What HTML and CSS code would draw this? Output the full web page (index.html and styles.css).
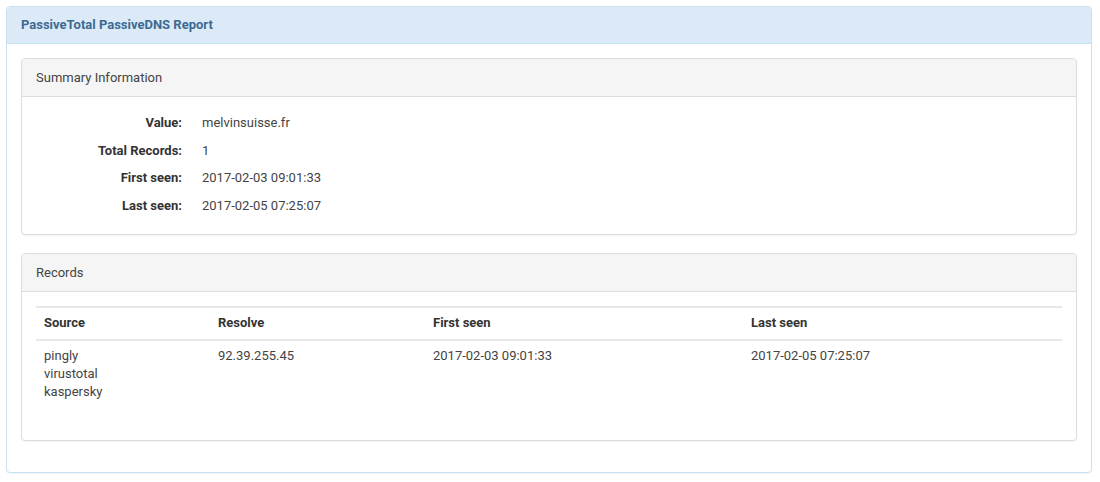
FILE: index.html
```html
<!DOCTYPE html>
<html lang="en">
<head>
    <meta charset="UTF-8">
    <title>PassiveTotal PassiveDNS Report</title>
    <link rel="stylesheet" href="styles.css">
</head>
<body>
    <div class="panel panel-info">
        <div class="panel-heading">
            <h3 class="panel-title">PassiveTotal PassiveDNS Report</h3>
        </div>
        <div class="panel-body">

            <div class="panel panel-default">
                <div class="panel-heading">Summary Information</div>
                <div class="panel-body">
                    <dl class="summary">
                        <dt>Value:</dt>
                        <dd>melvinsuisse.fr</dd>
                        <dt>Total Records:</dt>
                        <dd>1</dd>
                        <dt>First seen:</dt>
                        <dd>2017-02-03 09:01:33</dd>
                        <dt>Last seen:</dt>
                        <dd>2017-02-05 07:25:07</dd>
                    </dl>
                </div>
            </div>

            <div class="panel panel-default">
                <div class="panel-heading">Records</div>
                <div class="panel-body">
                    <table class="records">
                        <thead>
                            <tr>
                                <th class="col-source">Source</th>
                                <th class="col-resolve">Resolve</th>
                                <th class="col-first">First seen</th>
                                <th>Last seen</th>
                            </tr>
                        </thead>
                        <tbody>
                            <tr>
                                <td>pingly<br>virustotal<br>kaspersky</td>
                                <td>92.39.255.45</td>
                                <td>2017-02-03 09:01:33</td>
                                <td>2017-02-05 07:25:07</td>
                            </tr>
                        </tbody>
                    </table>
                </div>
            </div>

        </div>
    </div>
</body>
</html>
```

FILE: styles.css
```css
body {
    font-family: Roboto, "Helvetica Neue", Arial, sans-serif;
    font-size: 13px;
    line-height: 18px;
    color: #444;
    margin: 6px 8px 8px 6px;
    background-color: #fff;
}
.panel {
    border: 1px solid #ddd;
    border-radius: 4px;
    background-color: #fff;
    margin-bottom: 18px;
    box-shadow: 0 1px 1px rgba(0,0,0,0.05);
}
.panel-body > .panel:last-child {
    margin-bottom: 17px;
}
.panel-heading {
    padding: 10px 14px 9px;
    border-bottom: 1px solid #ddd;
    border-radius: 3px 3px 0 0;
    background-color: #f5f5f5;
    color: #444;
}
.panel-info {
    border-color: #c6e2f2;
}
.panel-info > .panel-heading {
    padding: 9px 14px;
    background-color: #dceaf7;
    border-bottom-color: #c6e2f2;
}
.panel-title {
    margin: 0;
    font-size: 13px;
    line-height: 18px;
    font-weight: 700;
    color: #3c6a93;
}
.panel-body {
    padding: 14px;
}
.summary {
    display: grid;
    grid-template-columns: 146px 1fr;
    column-gap: 20px;
    row-gap: 9.5px;
    margin: 0;
    padding: 3px 0 5px;
}
.summary dt {
    font-weight: 700;
    color: #333;
    text-align: right;
}
.summary dd {
    margin: 0;
}
.records {
    width: 100%;
    border-collapse: collapse;
    margin-bottom: 17px;
}
.records th,
.records td {
    padding: 6px 8px 8px;
    text-align: left;
    vertical-align: top;
}
.records th {
    padding: 6px 8px 7px;
    font-weight: 700;
    color: #333;
    border-top: 2px solid #e8e8e8;
    border-bottom: 2px solid #e8e8e8;
}
.col-source {
    width: 158px;
}
.col-resolve {
    width: 199px;
}
.col-first {
    width: 302px;
}
```
